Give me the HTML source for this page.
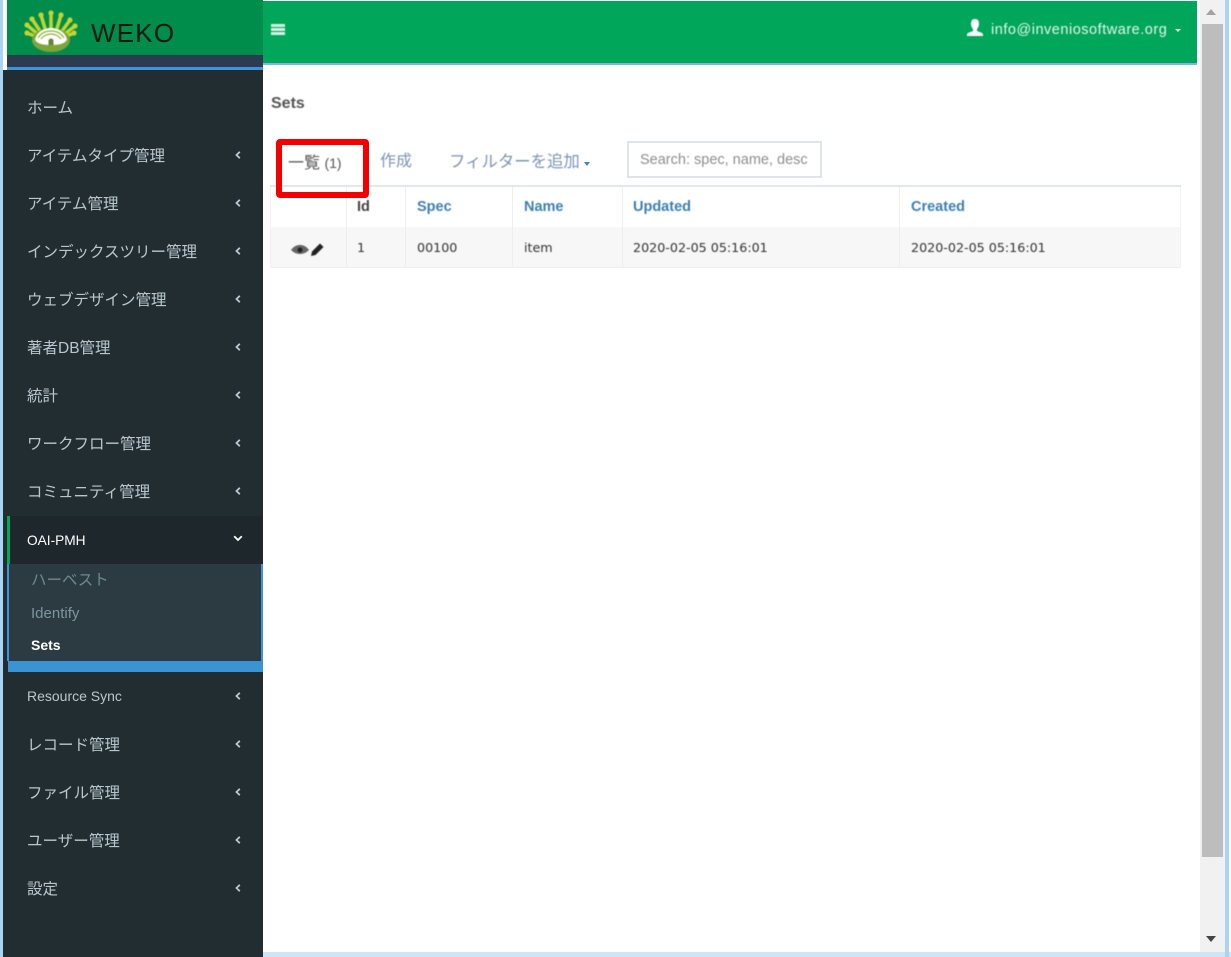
<!DOCTYPE html>
<html lang="ja">
<head>
<meta charset="utf-8">
<title>Sets</title>
<style>
html,body{margin:0;padding:0;width:1231px;height:957px;overflow:hidden;background:#fff;font-family:"Liberation Sans","Noto Sans CJK JP",sans-serif;}
.a{position:absolute;}
.frameL{left:0;top:0;width:3px;height:957px;background:#a9d5f2;}
.frameB{left:263px;top:952px;width:968px;height:5px;background:#cfe5f6;}
.frameR{left:1225px;top:0;width:4px;height:957px;background:#a8d3f3;}
.topbar{left:263px;top:1px;width:934px;height:62px;background:#00a65a;border-bottom:2px solid #7fb4e6;}
.sidebar{left:3px;top:70px;width:260px;height:887px;background:#222d32;}
.logo{left:7px;top:0;width:256px;height:55px;background:#008d4c;}
.logo2{left:7px;top:55px;width:256px;height:12px;background:#2c3b50;}
.logo3{left:7px;top:67px;width:256px;height:3px;background:#3c95d8;}
.weko{left:91px;top:18px;font-size:26px;line-height:30px;letter-spacing:1.2px;color:#0a1a10;}
.m{position:absolute;left:27px;font-size:15.5px;line-height:20px;color:#b8c7ce;white-space:nowrap;}
.c{position:absolute;left:233px;width:10px;height:10px;}
.active{left:7px;top:516px;width:256px;height:48px;background:#1e282c;}
.activeg{left:7px;top:516px;width:3px;height:48px;background:#00a65a;}
.sub{left:7px;top:564px;width:254px;height:97px;background:#2c3b41;border-left:2px solid #3c95d8;border-right:0;}
.subr{left:261px;top:564px;width:2px;height:97px;background:#3c95d8;}
.subb{left:8px;top:661px;width:255px;height:11px;background:#3a94d4;}
.s{position:absolute;left:31px;font-size:14px;line-height:20px;color:#8aa4af;white-space:nowrap;}
.soft{filter:blur(.6px);}
.th{position:absolute;top:198px;font-size:14.5px;font-weight:bold;line-height:18px;color:#3c7fb1;white-space:nowrap;}
.td{position:absolute;top:240px;font-family:"DejaVu Sans",sans-serif;font-size:12.7px;line-height:16px;color:#333;white-space:nowrap;}
</style>
</head>
<body>
<div class="a frameL"></div>
<div class="a frameB"></div>
<div class="a frameR"></div>

<div class="a topbar"></div>
<div class="a soft" style="left:271px;top:24px;width:14px;height:3px;background:#d9f2e5"></div>
<div class="a soft" style="left:271px;top:28px;width:14px;height:3px;background:#d9f2e5"></div>
<div class="a soft" style="left:271px;top:32px;width:14px;height:3px;background:#d9f2e5"></div>

<svg class="a soft" style="left:965px;top:18px" width="20" height="20" viewBox="0 0 20 20"><path d="M10 1c3 0 4 2 4 5 0 2-1 4-2 5v2c2 1 5 1.500 6 3v2H2v-2c1-1.500 4-2 6-3v-2C7 10 6 8 6 6c0-3 1-5 4-5z" fill="#fff"/></svg>
<div class="a soft" style="left:991px;top:21px;font-size:14.5px;line-height:18px;color:#e3f7ec;white-space:nowrap;letter-spacing:.52px">info@inveniosoftware.org</div>
<div class="a" style="left:1175px;top:29px;border:3.500px solid transparent;border-top:3.500px solid #e3f7ec"></div>

<div class="a sidebar"></div>
<div class="a logo"></div>
<div class="a logo2"></div>
<div class="a logo3"></div>
<svg class="a" style="left:22px;top:8px;filter:blur(.5px)" width="58" height="46" viewBox="0 0 58 46">
<g stroke="#c4d62c" stroke-width="3.500" fill="none" stroke-linecap="round">
<path d="M5 25 L18 30 M5 17 L18 28 M10 11 L20 26 M19 7 L24 24 M29 5 L29 22 M39 7 L34 24 M48 12 L38 26 M53 18 L40 28 M52 25 L40 30"/>
</g>
<g fill="#c4d62c"><circle cx="5" cy="25" r="2.600"/><circle cx="5" cy="17" r="2.600"/><circle cx="10" cy="11" r="2.600"/><circle cx="19" cy="7" r="2.600"/><circle cx="29" cy="5" r="2.600"/><circle cx="39" cy="7" r="2.600"/><circle cx="48" cy="12" r="2.600"/><circle cx="53" cy="18" r="2.600"/><circle cx="52" cy="25" r="2.600"/></g>
<ellipse cx="29" cy="32" rx="19" ry="12" fill="#7ea53a"/>
<path d="M13 32c1-7 8-12 16-12s15 5 16 12c-3 4-8 5-16 5s-13-1-16-5z" fill="#fff"/>
<path d="M16 30c3-5 8-7 13-7s10 2 13 7" fill="none" stroke="#8db03a" stroke-width="1.200"/>
<path d="M19 31c2-3 6-5 10-5s8 2 10 5" fill="none" stroke="#8db03a" stroke-width="1.200"/>
<path d="M26.500 37v-4a2.500 2.500 0 0 1 5 0v4z" fill="#5d8a2c"/>
</svg>
<div class="a weko">WEKO</div>

<div class="a active"></div>
<div class="a activeg"></div>
<div class="a sub"></div>
<div class="a subr"></div>
<div class="a subb"></div>

<div class="m" style="top:99px">ホーム</div>
<div class="m" style="top:147px">アイテムタイプ管理</div>
<div class="m" style="top:195px">アイテム管理</div>
<div class="m" style="top:243px">インデックスツリー管理</div>
<div class="m" style="top:291px">ウェブデザイン管理</div>
<div class="m" style="top:339px">著者DB管理</div>
<div class="m" style="top:387px">統計</div>
<div class="m" style="top:435px">ワークフロー管理</div>
<div class="m" style="top:483px">コミュニティ管理</div>
<div class="m" style="top:531px;color:#fff;font-size:13.700px">OAI-PMH</div>
<div class="m" style="top:686px;font-size:14px">Resource Sync</div>
<div class="m" style="top:736px">レコード管理</div>
<div class="m" style="top:784px">ファイル管理</div>
<div class="m" style="top:832px">ユーザー管理</div>
<div class="m" style="top:880px">設定</div>

<svg class="c" style="top:150px" viewBox="0 0 10 10"><path d="M6.800 1.800L3.500 5l3.300 3.200" fill="none" stroke="#b8c7ce" stroke-width="1.800"/></svg>
<svg class="c" style="top:198px" viewBox="0 0 10 10"><path d="M6.800 1.800L3.500 5l3.300 3.200" fill="none" stroke="#b8c7ce" stroke-width="1.800"/></svg>
<svg class="c" style="top:246px" viewBox="0 0 10 10"><path d="M6.800 1.800L3.500 5l3.300 3.200" fill="none" stroke="#b8c7ce" stroke-width="1.800"/></svg>
<svg class="c" style="top:294px" viewBox="0 0 10 10"><path d="M6.800 1.800L3.500 5l3.300 3.200" fill="none" stroke="#b8c7ce" stroke-width="1.800"/></svg>
<svg class="c" style="top:342px" viewBox="0 0 10 10"><path d="M6.800 1.800L3.500 5l3.300 3.200" fill="none" stroke="#b8c7ce" stroke-width="1.800"/></svg>
<svg class="c" style="top:390px" viewBox="0 0 10 10"><path d="M6.800 1.800L3.500 5l3.300 3.200" fill="none" stroke="#b8c7ce" stroke-width="1.800"/></svg>
<svg class="c" style="top:438px" viewBox="0 0 10 10"><path d="M6.800 1.800L3.500 5l3.300 3.200" fill="none" stroke="#b8c7ce" stroke-width="1.800"/></svg>
<svg class="c" style="top:486px" viewBox="0 0 10 10"><path d="M6.800 1.800L3.500 5l3.300 3.200" fill="none" stroke="#b8c7ce" stroke-width="1.800"/></svg>
<svg class="c" style="top:533px" viewBox="0 0 10 10"><path d="M1.200 3.200L5 7l3.800-3.800" fill="none" stroke="#fff" stroke-width="1.800"/></svg>
<svg class="c" style="top:691px" viewBox="0 0 10 10"><path d="M6.800 1.800L3.500 5l3.300 3.200" fill="none" stroke="#b8c7ce" stroke-width="1.800"/></svg>
<svg class="c" style="top:739px" viewBox="0 0 10 10"><path d="M6.800 1.800L3.500 5l3.300 3.200" fill="none" stroke="#b8c7ce" stroke-width="1.800"/></svg>
<svg class="c" style="top:787px" viewBox="0 0 10 10"><path d="M6.800 1.800L3.500 5l3.300 3.200" fill="none" stroke="#b8c7ce" stroke-width="1.800"/></svg>
<svg class="c" style="top:835px" viewBox="0 0 10 10"><path d="M6.800 1.800L3.500 5l3.300 3.200" fill="none" stroke="#b8c7ce" stroke-width="1.800"/></svg>
<svg class="c" style="top:883px" viewBox="0 0 10 10"><path d="M6.800 1.800L3.500 5l3.300 3.200" fill="none" stroke="#b8c7ce" stroke-width="1.800"/></svg>

<div class="s" style="top:571px;font-size:15.500px;color:#71878f">ハーベスト</div>
<div class="s" style="top:604px;font-size:15px;color:#7d959f">Identify</div>
<div class="s" style="top:635px;color:#fff;font-weight:bold">Sets</div>

<div class="a soft" style="left:271px;top:94px;font-size:16px;font-weight:bold;line-height:20px;color:#555">Sets</div>

<div class="a soft" style="left:288px;top:153px;font-size:16px;line-height:20px;color:#555;white-space:nowrap">一覧 <span style="font-size:14px">(1)</span></div>
<div class="a soft" style="left:380px;top:152px;font-size:16px;line-height:20px;color:#7d93b5;white-space:nowrap">作成</div>
<div class="a soft" style="left:449px;top:152px;font-size:16.400px;line-height:20px;color:#7d93b5;white-space:nowrap">フィルターを追加</div>
<div class="a" style="left:584px;top:162px;border:3.500px solid transparent;border-top:4px solid #4d7fb5"></div>
<div class="a" style="left:627px;top:141px;width:195px;height:37px;box-sizing:border-box;border:2px solid #dfe4ea;background:#fff"></div>
<div class="a soft" style="left:640px;top:150px;width:170px;overflow:hidden;font-size:14.500px;line-height:20px;color:#8d8d8d;white-space:nowrap">Search: spec, name, desc</div>

<div class="a" style="left:270px;top:185px;width:911px;height:2px;background:#e3e7ec"></div>
<div class="a" style="left:270px;top:227px;width:911px;height:41px;background:#f7f7f7"></div>
<div class="a" style="left:270px;top:267px;width:911px;height:1px;background:#eee"></div>
<div class="a" style="left:270px;top:187px;width:1px;height:81px;background:#f2f2f2"></div>
<div class="a" style="left:346px;top:187px;width:1px;height:81px;background:#eee"></div>
<div class="a" style="left:405px;top:187px;width:1px;height:81px;background:#eee"></div>
<div class="a" style="left:512px;top:187px;width:1px;height:81px;background:#eee"></div>
<div class="a" style="left:622px;top:187px;width:1px;height:81px;background:#eee"></div>
<div class="a" style="left:899px;top:187px;width:1px;height:81px;background:#eee"></div>
<div class="a" style="left:1180px;top:187px;width:1px;height:81px;background:#f2f2f2"></div>

<div class="soft">
<div class="th" style="left:357px;color:#444">Id</div>
<div class="th" style="left:417px">Spec</div>
<div class="th" style="left:524px">Name</div>
<div class="th" style="left:633px">Updated</div>
<div class="th" style="left:911px">Created</div>
<div class="td" style="left:357px">1</div>
<div class="td" style="left:417px">00100</div>
<div class="td" style="left:524px">item</div>
<div class="td" style="left:633px">2020-02-05 05:16:01</div>
<div class="td" style="left:911px">2020-02-05 05:16:01</div>
<svg class="a" style="left:290px;top:242px" width="40" height="14" viewBox="0 0 40 14">
<path d="M1 8c3-4 6-5 9-5s6 1 9 5c-3 3-6 4-9 4s-6-1-9-4z" fill="#666"/>
<circle cx="10" cy="8" r="2.500" fill="#222"/>
<path d="M21 14l1-4.500L30 1.500l3.500 3.500-8 8z" fill="#222"/>
</svg>
</div>

<div class="a" style="left:276px;top:139px;width:93px;height:59px;box-sizing:border-box;border:6px solid #f40000;border-radius:4px"></div>

<div class="a" style="left:1200px;top:0;width:25px;height:952px;background:#f1f1f1"></div>
<div class="a" style="left:1202px;top:24px;width:21px;height:833px;background:#bdbdbd"></div>
<div class="a" style="left:1206px;top:9px;border:5.500px solid transparent;border-bottom:6px solid #a3a3a3;border-top:0"></div>
<div class="a" style="left:1206px;top:936px;border:5.500px solid transparent;border-top:6px solid #444;border-bottom:0"></div>
</body>
</html>
